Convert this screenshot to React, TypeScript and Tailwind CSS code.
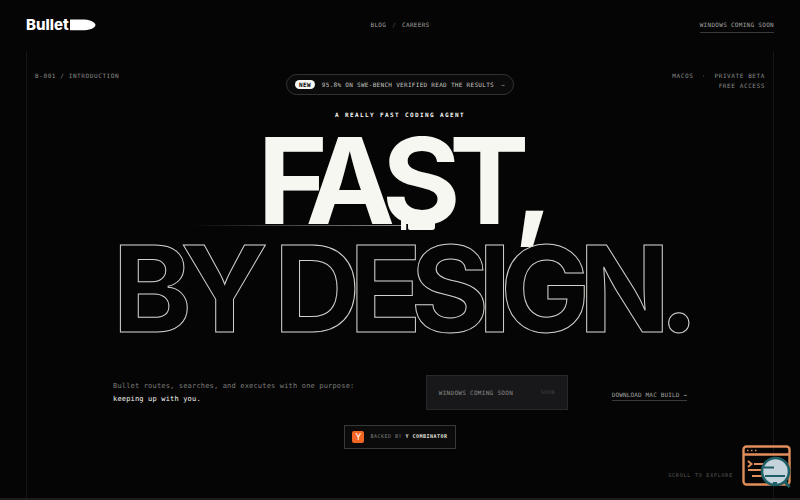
import clsx from "clsx";

const mono = "font-['DejaVu_Sans_Mono',monospace]";

function Logo() {
  return (
    <a href="#" className="flex items-center gap-px text-white">
      <span className="text-[15px] leading-4 font-extrabold">Bullet</span>
      <svg width="26" height="12" viewBox="0 0 26 12" fill="currentColor">
        <path d="M0 0.5H12C19 0.5 25 2.500 25.5 6C25 9.500 19 11.3 12 11.3H0Z" />
      </svg>
    </a>
  );
}

function Streak() {
  return (
    <div className="absolute left-[163px] top-[92px] flex items-center">
      <div className="h-px w-[211px] bg-linear-to-r from-transparent to-[#8a8a86]" />
      <svg width="34" height="12" viewBox="0 0 34 12" fill="#f7f7f2">
        <path d="M0 0H34V8Q34 11 31 11H9Q7 11 7 9V5H5.500V11H0Z" />
        <path d="M5.500 5H7V11H5.500Z" fill="#050505" />
      </svg>
    </div>
  );
}

function Inspector() {
  return (
    <svg width="50" height="44" viewBox="0 0 50 44" fill="none">
      <rect x="1.5" y="1.5" width="46" height="38" rx="3" stroke="#e08f5c" strokeWidth="2.4" />
      <path d="M2 9.5H47" stroke="#e08f5c" strokeWidth="2.4" />
      <path d="M5 5.5h1.5M9 5.5h1.5M13 5.5h1.5" stroke="#e08f5c" strokeWidth="1.5" />
      <path d="M6 16l3.5 3-3.5 3M12 19H24M6 25H20M10 31H22" stroke="#e08f5c" strokeWidth="2" />
      <circle cx="33.5" cy="26.5" r="13.5" fill="#c5d3dc" stroke="#1f5f66" strokeWidth="2.6" />
      <path d="M22 22.5H32M23 31H43M31 38h4" stroke="#1f5f66" strokeWidth="2" />
      <path d="M43 37l4.500 5" stroke="#1f5f66" strokeWidth="3" />
    </svg>
  );
}

export default function App() {
  return (
    <div className="relative flex min-h-screen flex-col bg-[#050505] font-['Inter',sans-serif] text-[#f7f7f2] antialiased">
      <header className="grid grid-cols-[1fr_auto_1fr] items-center px-[26px] pt-4">
        <Logo />
        <nav className={clsx(mono, "flex gap-[6px] text-[6px] tracking-wider text-[#a3a3a0]")}>
          <a href="#">BLOG</a>
          <span className="text-[#5c5c5a]">/</span>
          <a href="#">CAREERS</a>
        </nav>
        <a
          href="#"
          className={clsx(mono, "justify-self-end border-b border-[#3a3a3a] pt-[5px] pb-[3px] text-[6px] leading-2 tracking-wider text-[#a3a3a0]")}
        >
          WINDOWS COMING SOON
        </a>
      </header>

      <main className="mx-[26px] mt-[18px] flex flex-1 flex-col border-x border-[#161616]">
        <div className={clsx(mono, "grid grid-cols-[1fr_auto_1fr] px-2 pt-5 text-[6px] leading-[10px] tracking-widest text-[#8a8a88]")}>
          <p>B-001 / INTRODUCTION</p>
          <a
            href="#"
            className="mt-[3px] flex h-[21px] items-center gap-[7px] rounded-full border border-[#333] bg-[#0b0b0b] px-2 tracking-wider text-[#c4c4c0]"
          >
            <span className="rounded-full bg-[#f7f7f2] px-1 leading-[9px] font-bold text-black">
              NEW
            </span>
            <span>95.8% ON SWE-BENCH VERIFIED READ THE RESULTS</span>
            <span className="text-[#8a8a88]">→</span>
          </a>
          <p className="text-right">
            MACOS &nbsp;·&nbsp; PRIVATE BETA
            <br />
            FREE ACCESS
          </p>
        </div>

        <p className={clsx(mono, "mt-4 text-center text-[6px] leading-2 font-bold tracking-[0.23em]")}>
          A REALLY FAST CODING AGENT
        </p>

        <div className="relative mt-2">
          <h1 className="text-center text-[120px] leading-[108px] font-bold tracking-[-0.095em] whitespace-nowrap">
            FAST,
            <br />
            <span className="text-transparent [-webkit-text-stroke:1px_#d0d0cc]">
              BY DESIGN.
            </span>
          </h1>
          <Streak />
        </div>

        <div className={clsx(mono, "mt-8 flex items-center px-[86px]")}>
          <p className="flex-1 text-[7px] leading-[13px] tracking-wide whitespace-nowrap text-[#7c7c7a]">
            Bullet routes, searches, and executes with one purpose:
            <br />
            <span className="text-[#f7f7f2]">keeping up with you.</span>
          </p>
          <button
            disabled
            className="flex h-[35px] w-[142px] items-center justify-between border border-[#29292b] bg-[#18181a] px-3 text-[6px] tracking-wider text-[#8a8a88]"
          >
            WINDOWS COMING SOON
            <span className="text-[5px] tracking-widest text-[#444446]">SOON</span>
          </button>
          <a
            href="#"
            className="mt-1 ml-11 border-b border-[#3a3a3a] text-[6px] leading-[11px] tracking-wide text-[#a3a3a0]"
          >
            DOWNLOAD MAC BUILD →
          </a>
        </div>

        <a
          href="#"
          className={clsx(mono, "mt-[15px] flex h-6 items-center gap-[6px] self-center border border-[#383838] bg-[#0b0b0b] px-[7px] text-[5px] tracking-widest text-[#7c7c7a]")}
        >
          <span className="flex size-3 items-center justify-center rounded-xs bg-[#f26522] font-['Inter',sans-serif] text-[9px] tracking-normal text-white">
            Y
          </span>
          <span>
            BACKED BY <b className="text-[#e0e0dc]">Y COMBINATOR</b>
          </span>
        </a>

        <p className={clsx(mono, "mt-auto mr-10 mb-[19px] self-end text-[5px] leading-2 tracking-[0.16em] text-[#5c5c5a]")}>
          SCROLL TO EXPLORE
        </p>
      </main>
      <div className="h-[2px] bg-[#1c1c1c]" />

      <div className="absolute right-2 bottom-[11px]">
        <Inspector />
      </div>
    </div>
  );
}
